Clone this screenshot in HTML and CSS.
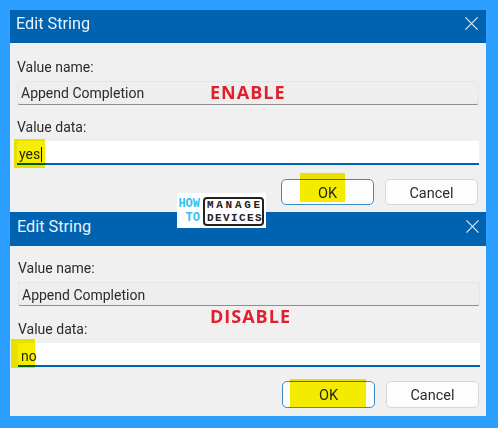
FILE: index.html
```html
<!DOCTYPE html>
<html lang="en">
  <head>
    <meta charset="UTF-8" />
    <title>Edit String</title>
    <link rel="stylesheet" href="styles.css">
  </head>
  <body>
    <div class="frame">
      <section class="dialog first">
        <div class="titlebar">
          <span>Edit String</span>
          <svg class="close" width="15" height="15" viewBox="0 0 16 16"><path d="M1.5 1.5l13 13M14.5 1.5l-13 13" /></svg>
        </div>
        <div class="body">
          <label>Value name:</label>
          <div class="field readonly">Append Completion</div>
          <label class="second-label">Value data:</label>
          <div class="field active">yes<i class="caret"></i></div>
          <div class="buttons">
            <button class="btn primary">OK</button>
            <button class="btn">Cancel</button>
          </div>
        </div>
        <b class="state enable">ENABLE</b>
        <i class="mark mark-yes"></i>
        <i class="mark mark-ok1"></i>
      </section>
      <section class="dialog second">
        <div class="titlebar">
          <span>Edit String</span>
          <svg class="close" width="15" height="15" viewBox="0 0 16 16"><path d="M1.5 1.5l13 13M14.5 1.5l-13 13" /></svg>
        </div>
        <div class="body">
          <label>Value name:</label>
          <div class="field readonly">Append Completion</div>
          <label class="second-label">Value data:</label>
          <div class="field active">no</div>
          <div class="buttons">
            <button class="btn primary">OK</button>
            <button class="btn">Cancel</button>
          </div>
        </div>
        <b class="state disable">DISABLE</b>
        <i class="mark mark-no"></i>
        <i class="mark mark-ok2"></i>
      </section>
      <div class="logo">
        <div class="logo-how"><span>HOW</span><span>TO</span></div>
        <div class="logo-box"><span class="manage">MANAGE</span><span class="devices">DEVICES</span></div>
      </div>
    </div>
  </body>
</html>
```

FILE: styles.css
```css
* {
  margin: 0;
  padding: 0;
  box-sizing: border-box;
}
html,
body {
  height: 100%;
  background: #2b9fff;
  overflow: hidden;
}
body {
  font-family: Roboto, "Open Sans", sans-serif;
  font-size: 14px;
  color: #2b2b2b;
}
.frame {
  position: relative;
  width: 476px;
  margin: 10px 0 0 10px;
}
.dialog {
  position: relative;
  background: #f0f0f0;
}
.first {
  height: 202px;
}
.second {
  height: 204px;
}
.titlebar {
  display: flex;
  align-items: flex-start;
  justify-content: space-between;
  height: 33px;
  padding: 4px 7px 0 6px;
  background: #0063b1;
  color: #e8f2fa;
  font-size: 16.3px;
  line-height: 20px;
}
.second .titlebar {
  height: 34px;
  padding: 5px 6px 0 7px;
}
.close {
  margin-top: 2px;
  fill: none;
  stroke: #d9e8f5;
  stroke-width: 1.3;
}
.body {
  display: flex;
  flex-direction: column;
  padding: 14px 7px 0 7px;
  filter: blur(0.3px);
}
.second .body {
  padding: 12px 6px 0 8px;
}
label {
  height: 20px;
  line-height: 20px;
}
.second-label {
  margin-top: 12px;
}
.second .second-label {
  margin-top: 13px;
}
.field {
  height: 24px;
  margin-top: 4px;
  padding-left: 3px;
  line-height: 23px;
}
.readonly {
  border: 1px solid #e6e6e6;
  border-bottom: 1px solid #8e8e8e;
  border-radius: 3px;
  background: #eeeeee;
}
.second .readonly {
  line-height: 25px;
}
.active {
  background: #fff;
  border-bottom: 2px solid #0063b1;
  line-height: 26px;
}
.first .active {
  padding-left: 2px;
}
.caret {
  display: inline-block;
  width: 1px;
  height: 15px;
  margin-left: 1px;
  vertical-align: -3px;
  background: #111;
}
.buttons {
  display: flex;
  justify-content: flex-end;
  gap: 11px;
  margin-top: 14px;
  padding-right: 1px;
}
.btn {
  width: 93px;
  height: 26px;
  padding-top: 2px;
  border: 1px solid #d6d6d6;
  border-radius: 5px;
  background: #fdfdfd;
  font: 14.5px Roboto, "Open Sans", sans-serif;
  color: #2b2b2b;
}
.primary {
  border: 1.5px solid #3a8ac8;
}
.second .btn {
  height: 27px;
}
.state {
  position: absolute;
  left: 200px;
  font-family: "Open Sans", sans-serif;
  font-size: 18px;
  line-height: 20px;
  letter-spacing: 1px;
  color: #e0202e;
}
.enable {
  top: 72px;
}
.disable {
  top: 94px;
}
.mark {
  position: absolute;
  background: #f6ee00;
  mix-blend-mode: multiply;
}
.mark-yes {
  left: 4px;
  top: 129px;
  width: 31px;
  height: 29px;
}
.mark-ok1 {
  left: 290px;
  top: 163px;
  width: 45px;
  height: 29px;
}
.mark-no {
  left: 1px;
  top: 127px;
  width: 24px;
  height: 29px;
}
.mark-ok2 {
  left: 280px;
  top: 167px;
  width: 76px;
  height: 28px;
}
.logo {
  position: absolute;
  left: 167px;
  top: 183px;
  display: flex;
  gap: 3px;
  width: 89px;
  height: 35px;
  padding: 4px 2px 2px 1px;
  background: #fff;
}
.logo-how {
  display: flex;
  flex-direction: column;
  align-items: flex-end;
  width: 22px;
  color: #35c0f2;
  font: bold 12px/14px "Liberation Mono", monospace;
}
.logo-box {
  display: flex;
  flex-direction: column;
  width: 61px;
  height: 29px;
  padding-left: 2px;
  border: 2px solid #222;
  border-radius: 4px;
  color: #222;
  font: bold 11px/12.5px "Liberation Mono", monospace;
  white-space: nowrap;
}
.manage {
  letter-spacing: 2.7px;
}
.devices {
  letter-spacing: 1.4px;
}
```
